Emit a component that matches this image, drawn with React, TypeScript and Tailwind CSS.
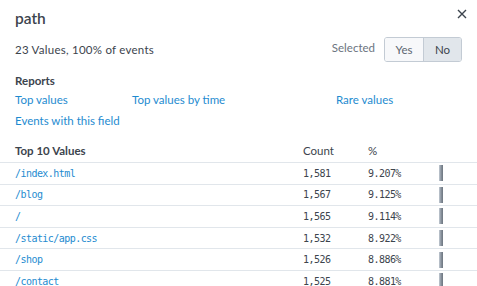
import React from "react";

const rows = [
  { v: "/index.html", c: "1,581", p: "9.207%" },
  { v: "/blog", c: "1,567", p: "9.125%" },
  { v: "/", c: "1,565", p: "9.114%" },
  { v: "/static/app.css", c: "1,532", p: "8.922%" },
  { v: "/shop", c: "1,526", p: "8.886%" },
  { v: "/contact", c: "1,525", p: "8.881%" },
];

const sans = { fontFamily: "Lato, 'Open Sans', sans-serif" };

export default function App() {
  return (
    <div className="w-[477px] h-[286px] overflow-hidden bg-white text-[#3c444d]" style={sans}>
      <div className="flex items-start justify-between pl-[15px] pr-[10px] pt-[7px]">
        <div className="text-[15.5px] font-semibold leading-[22px]">path</div>
        <svg width="10" height="10" viewBox="0 0 10 10" className="mt-[2px] mr-[0px]">
          <path d="M1 1 L9 9 M9 1 L1 9" stroke="#3c444d" strokeWidth="1.4" />
        </svg>
      </div>
      <div className="flex items-center justify-between pl-[15px] pr-[15px] mt-[8px]">
        <div className="text-[11.5px] tracking-[0.25px]">23 Values, 100% of events</div>
        <div className="flex items-center gap-[9px]">
          <span className="text-[11.5px] text-[#6b7480] -mt-[3px]">Selected</span>
          <div className="flex h-[25px] rounded-[3px] border border-[#c3cbd4] overflow-hidden text-[11.5px]">
            <div className="w-[39px] flex items-center justify-center bg-[#f7f8fa] border-r border-[#c3cbd4] text-[#5c6670]">Yes</div>
            <div className="w-[37px] flex items-center justify-center bg-[#e1e6eb]">No</div>
          </div>
        </div>
      </div>
      <div className="pl-[15px] mt-[12px] text-[11.5px] font-bold leading-[14px]">Reports</div>
      <div className="pl-[15px] mt-[5px] grid grid-cols-[117px_204px_1fr] gap-y-[7px] text-[11.5px] leading-[14px] text-[#1e8bd0]">
        <span>Top values</span>
        <span>Top values by time</span>
        <span>Rare values</span>
        <span className="col-span-3">Events with this field</span>
      </div>
      <div className="mt-[12px]">
        <div className="flex items-center h-[23px] border-b border-[#e1e6eb] text-[11.5px] pl-[15px]">
          <div className="w-[288px] font-bold">Top 10 Values</div>
          <div className="w-[65px]">Count</div>
          <div>%</div>
        </div>
        {rows.map((r) => (
          <div key={r.v} className="flex items-center h-[21.6px] border-b border-[#e1e6eb] pl-[15px] text-[10px] tracking-[-0.55px]" style={{ fontFamily: "'DejaVu Sans Mono', monospace" }}>
            <div className="w-[288px] text-[#1e8bd0]">{r.v}</div>
            <div className="w-[65px] text-[#3c444d]">{r.c}</div>
            <div className="w-[71px] text-[#3c444d]">{r.p}</div>
            <div className="w-[4px] h-[16px] bg-gradient-to-r from-[#c3cbd4] via-[#8a939e] to-[#6d7680]" />
          </div>
        ))}
      </div>
    </div>
  );
}
